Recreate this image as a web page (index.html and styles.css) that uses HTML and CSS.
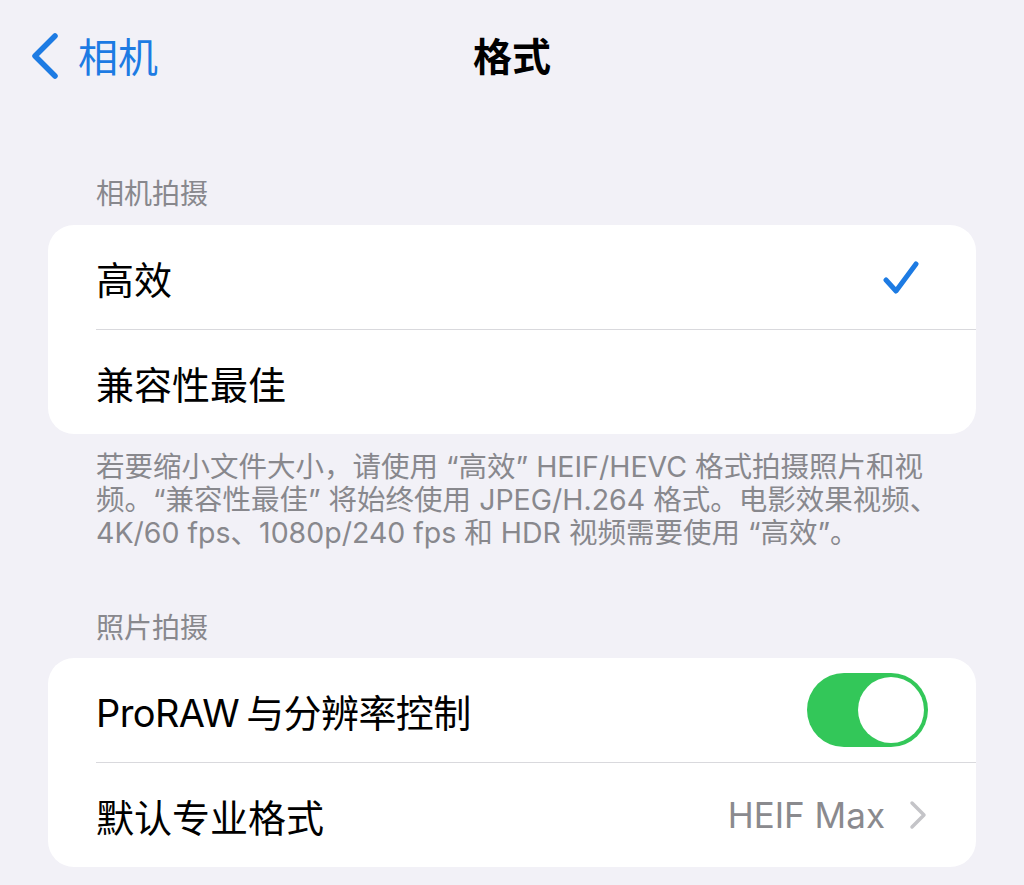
FILE: index.html
```html
<!DOCTYPE html>
<html lang="zh-CN">
<head>
    <meta charset="UTF-8">
    <meta name="viewport" content="width=device-width, initial-scale=1.0">
    <title>格式</title>
    <link rel="stylesheet" href="styles.css">
</head>
<body>

    <!-- Navigation bar -->
    <div class="navbar">
        <a class="back" href="#">
            <svg class="back-icon" width="28" height="46" viewBox="0 0 28 46">
                <polyline points="24,3 4,23 24,43" fill="none" stroke="#1d7be3" stroke-width="5.5" stroke-linecap="round" stroke-linejoin="round"/>
            </svg>
            <span>相机</span>
        </a>
        <div class="title">格式</div>
        <div></div>
    </div>

    <!-- Camera capture -->
    <div class="section-header header-first">相机拍摄</div>
    <div class="card">
        <div class="row">
            <span class="label">高效</span>
            <svg class="check" width="36" height="33" viewBox="0 0 36 33">
                <polyline points="3,19 13,30 33,3" fill="none" stroke="#1d7be3" stroke-width="5" stroke-linecap="round" stroke-linejoin="round"/>
            </svg>
        </div>
        <div class="row">
            <span class="label">兼容性最佳</span>
        </div>
    </div>
    <div class="section-footer">
        若要缩小文件大小，请使用 “高效” HEIF/HEVC 格式拍摄照片和视<br>
        频。“兼容性最佳” 将始终使用 JPEG/H.264 格式。电影效果视频、<br>
        4K/60 fps、1080p/240 fps 和 HDR 视频需要使用 “高效”。
    </div>

    <!-- Photo capture -->
    <div class="section-header">照片拍摄</div>
    <div class="card">
        <div class="row">
            <span class="label latin-tight">ProRAW 与分辨率控制</span>
            <div class="toggle on"><div class="knob"></div></div>
        </div>
        <div class="row">
            <span class="label">默认专业格式</span>
            <span class="value">HEIF Max</span>
            <svg class="chevron" width="18" height="30" viewBox="0 0 18 30">
                <polyline points="3,3 15,15 3,27" fill="none" stroke="#c4c4c8" stroke-width="3.5" stroke-linecap="round" stroke-linejoin="round"/>
            </svg>
        </div>
    </div>

</body>
</html>
```

FILE: styles.css
```css
body {
    margin: 0;
    background-color: #f2f1f7;
    font-family: "Inter", "Noto Sans CJK SC", sans-serif;
    color: #000;
    overflow: hidden;
}
.navbar {
    display: grid;
    grid-template-columns: 1fr auto 1fr;
    align-items: center;
    height: 112px;
}
.back {
    display: flex;
    align-items: center;
    gap: 19px;
    padding-left: 31px;
    color: #1d7be3;
    text-decoration: none;
    font-size: 40px;
}
.back span {
    font-family: "Noto Sans CJK SC", sans-serif;
    position: relative;
    top: -1px;
}
.title {
    font-family: "Noto Sans CJK SC", sans-serif;
    font-size: 39px;
    font-weight: bold;
    position: relative;
    top: -2px;
}
.section-header {
    font-family: "Noto Sans CJK SC", sans-serif;
    color: #88888d;
    font-size: 28px;
    line-height: 34px;
    padding-left: 96px;
    margin-top: 60px;
    margin-bottom: 15px;
}
.header-first {
    margin-top: 63px;
    margin-bottom: 16px;
}
.card {
    background-color: #fff;
    border-radius: 26px;
    margin: 0 48px;
    overflow: hidden;
}
.row {
    display: flex;
    align-items: center;
    height: 104px;
    margin-left: 48px;
    padding-right: 48px;
}
.row + .row {
    border-top: 1px solid #d9d9dd;
}
.label {
    flex: 1;
    font-size: 38px;
}
.latin-tight {
    letter-spacing: -0.6px;
    word-spacing: -3px;
}
.check {
    margin-right: 9px;
}
.value {
    color: #8a8a8e;
    font-size: 35px;
    margin-right: 24px;
}
.chevron {
    margin-right: 1px;
}
.toggle {
    width: 121px;
    height: 74px;
    border-radius: 37px;
    background-color: #33c759;
    position: relative;
}
.knob {
    position: absolute;
    top: 4px;
    right: 4px;
    width: 66px;
    height: 66px;
    border-radius: 50%;
    background-color: #fff;
}
.section-footer {
    color: #88888d;
    font-size: 28.5px;
    line-height: 33px;
    padding-left: 96px;
    margin-top: 16px;
    white-space: nowrap;
}
```
